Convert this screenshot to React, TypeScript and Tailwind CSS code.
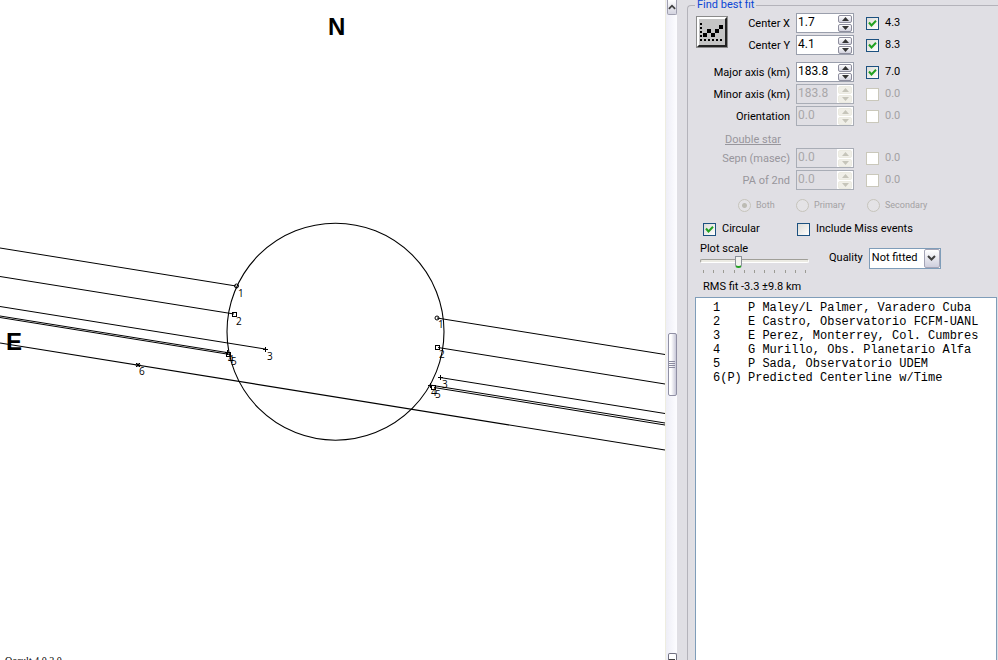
import { useState } from 'react';
import type { ReactNode } from 'react';

const observers = [
  { id: '1', name: 'P Maley/L Palmer, Varadero Cuba' },
  { id: '2', name: 'E Castro, Observatorio FCFM-UANL' },
  { id: '3', name: 'E Perez, Monterrey, Col. Cumbres' },
  { id: '4', name: 'G Murillo, Obs. Planetario Alfa' },
  { id: '5', name: 'P Sada, Observatorio UDEM' },
  { id: '6(P)', name: 'Predicted Centerline w/Time' },
];

// x1, y1, x2, y2 of each chord on the sky plane
const chords = [
  [0, 248, 236, 286],
  [0, 276.5, 234, 314],
  [0, 306.5, 265, 349],
  [0, 316, 228, 352.7],
  [0, 317.5, 230, 354.5],
  [437, 318, 665, 354.5],
  [438, 347.5, 665, 384],
  [440, 377.5, 665, 413.5],
  [430, 385, 665, 423],
  [434, 387.5, 665, 425],
];

const chordLabels = [
  { x: 238, y: 297, text: '1' },
  { x: 236, y: 325, text: '2' },
  { x: 267, y: 360, text: '3' },
  { x: 228, y: 363, text: '4' },
  { x: 231, y: 365, text: '5' },
  { x: 139, y: 375, text: '6' },
  { x: 438, y: 328, text: '1' },
  { x: 439, y: 358, text: '2' },
  { x: 442, y: 388, text: '3' },
  { x: 431, y: 396, text: '4' },
  { x: 435, y: 398, text: '5' },
];

const Cross = ({ x, y }: { x: number; y: number }) => (
  <path d={`M${x - 2.5} ${y}h5M${x} ${y - 2.5}v5`} />
);

const Plot = () => (
  <svg
    viewBox="0 0 665 660"
    preserveAspectRatio="xMidYMin slice"
    className="h-full w-full"
    role="img"
    aria-label="Occultation chords"
  >
    <g fill="none" stroke="#000">
      <circle cx="335.5" cy="331.7" r="108.5" strokeWidth="1.1" />
      {chords.map(([x1, y1, x2, y2]) => (
        <line key={`${x1}-${y1}`} x1={x1} y1={y1} x2={x2} y2={y2} />
      ))}
      <line x1="0" y1="343" x2="665" y2="450" strokeWidth="1.2" />
      <circle cx="236.5" cy="286" r="2" />
      <circle cx="437" cy="318" r="2" />
      <rect x="232.5" y="312.5" width="4" height="4" />
      <rect x="435.5" y="345.5" width="4" height="4" />
      <rect x="226.5" y="352.5" width="4" height="4" />
      <rect x="431.5" y="385.5" width="4" height="4" />
      <Cross x={265.5} y={349.5} />
      <Cross x={227.5} y={352.5} />
      <Cross x={440.5} y={377.5} />
      <Cross x={430.5} y={385.5} />
      <path d="M136 363l4 4m0-4l-4 4M135.500 365h5M138 363v4" />
    </g>
    <g className="font-['Open_Sans',sans-serif] text-[10px]">
      {chordLabels.map(({ x, y, text }) => (
        <text key={`${x}-${y}`} x={x} y={y}>
          {text}
        </text>
      ))}
    </g>
    <g className="font-['Liberation_Sans',sans-serif] text-[24px] font-bold">
      <text x="328" y="35">
        N
      </text>
      <text x="6" y="350">
        E
      </text>
    </g>
    <text x="5" y="664" className="font-['Liberation_Serif',serif] text-[10px]">
      Occult 4.0.2.0
    </text>
  </svg>
);

const Chevron = ({ up = false }: { up?: boolean }) => (
  <svg viewBox="0 0 9 6" className="h-1.5 w-[9px]" fill="none" stroke="#404040" strokeWidth="2">
    <path d={up ? 'M1 5l3.500-3.500L8 5' : 'M1 1l3.500 3.500L8 1'} />
  </svg>
);

const ScrollBar = () => (
  <div className="flex w-3 shrink-0 flex-col items-center justify-between border-l border-[#eeede0] bg-linear-to-r from-[#eeeef6] to-[#fdfdff] pl-px">
    <button
      aria-label="Scroll up"
      className="flex h-[15px] w-2.5 items-center justify-center overflow-hidden rounded-b-[2px] border border-t-0 border-[#a0a0b0] bg-linear-to-b from-white to-[#d4d4e0]"
    >
      <Chevron up />
    </button>
    <div className="mt-[60px] flex h-[63px] w-[9px] flex-col items-center justify-center gap-px rounded-[2px] border border-[#9090a4] bg-linear-to-r from-white from-30% to-[#c8c8d8]">
      <span className="h-px w-1.5 bg-[#8c8ca0]" />
      <span className="h-px w-1.5 bg-[#8c8ca0]" />
      <span className="h-px w-1.5 bg-[#8c8ca0]" />
      <span className="h-px w-1.5 bg-[#8c8ca0]" />
    </div>
    <button
      aria-label="Scroll down"
      className="flex h-[7px] w-[9px] items-end justify-center overflow-hidden rounded-t-[2px] border border-b-0 border-[#707080] bg-white"
    >
      <span className="h-px w-1.5 bg-[#404040]" />
    </button>
  </div>
);

interface CheckProps {
  checked?: boolean;
  disabled?: boolean;
  children: ReactNode;
  className?: string;
}

const Check = ({ checked = false, disabled = false, children, className = '' }: CheckProps) => {
  const [on, setOn] = useState(checked);

  return (
    <label className={`flex items-center gap-1.5 ${disabled ? 'text-[#a3a1a3]' : ''} ${className}`}>
      <span className="relative flex">
        <input
          type="checkbox"
          checked={on}
          disabled={disabled}
          onChange={() => setOn(!on)}
          className="size-[13px] appearance-none border border-[#1c5180] bg-linear-to-br from-[#dcdcd7] to-white disabled:border-[#cac8bb] disabled:from-white"
        />
        {on && (
          <svg
            viewBox="0 0 13 13"
            className="pointer-events-none absolute inset-0 size-[13px]"
            fill="none"
            stroke="#21a121"
            strokeWidth="2"
          >
            <path d="M3 5.500l2.500 3L10 3.800" />
          </svg>
        )}
      </span>
      {children}
    </label>
  );
};

const SpinButton = ({ up = false, disabled }: { up?: boolean; disabled: boolean }) => (
  <button
    disabled={disabled}
    aria-label={up ? 'Increase' : 'Decrease'}
    className="flex h-2 w-3.5 items-center justify-center rounded-[2px] border border-[#8e8e9e] bg-linear-to-b from-white to-[#d2d2de] text-[#333] disabled:border-[#ecebe2] disabled:bg-[#f0efe8] disabled:bg-none disabled:text-[#c6c5ba]"
  >
    <svg viewBox="0 0 7 4" className="h-1 w-[7px]" fill="currentColor">
      <path d={up ? 'M3.500 0L7 4H0z' : 'M0 0h7L3.500 4z'} />
    </svg>
  </button>
);

interface FitRowProps {
  label: string;
  value: string;
  error: string;
  checked?: boolean;
  disabled?: boolean;
  labelDisabled?: boolean;
}

const FitRow = ({
  label,
  value,
  error,
  checked = false,
  disabled = false,
  labelDisabled = false,
}: FitRowProps) => {
  const id = label.toLowerCase().replace(/\W+/g, '-');

  return (
    <div className="flex h-5 items-center">
      <label
        htmlFor={id}
        className={`flex-1 pt-0.5 text-right ${labelDisabled ? 'text-[#98969c]' : ''}`}
      >
        {label}
      </label>
      <div
        className={`ml-1.5 flex h-5 w-[58px] border ${
          disabled ? 'border-[#a9adb6]' : 'border-[#9a9fac] bg-white'
        }`}
      >
        <input
          id={id}
          defaultValue={value}
          disabled={disabled}
          className="h-4 w-10 min-w-0 pl-px text-[12px] disabled:text-[#a9a7a9]"
        />
        <div className="flex w-4 flex-col items-center justify-center gap-px bg-white">
          <SpinButton up disabled={disabled} />
          <SpinButton disabled={disabled} />
        </div>
      </div>
      <Check checked={checked} disabled={disabled} className="ml-3 w-[60px]">
        {error}
      </Check>
    </div>
  );
};

interface StarOptionProps {
  label: string;
  checked?: boolean;
  className?: string;
}

const StarOption = ({ label, checked = false, className = '' }: StarOptionProps) => (
  <label className={`flex items-center gap-[5px] ${className}`}>
    <input
      type="radio"
      name="star"
      disabled
      defaultChecked={checked}
      className="size-[13px] appearance-none rounded-full border border-[#c6c4bc] bg-[#e4e3e6] checked:bg-[radial-gradient(circle,#bdbcb4_2px,#e4e3e6_3px)]"
    />
    {label}
  </label>
);

const FitButton = () => (
  <button
    aria-label="Find best fit"
    className="mt-[3px] ml-px size-8 shrink-0 border border-[#8a8a8a] bg-[#c0c0c0]"
  >
    <svg viewBox="0 0 30 30" className="size-[30px]">
      <path d="M0 0h30L0 30z" fill="#fff" />
      <path d="M30 0v30H0z" fill="#222" />
      <path d="M2 2h26v26H2z" fill="#c4c4c4" />
      <g fill="#000">
        <path d="M3 6h2v2H3zM3 10h2v2H3zM3 14h2v2H3zM3 18h2v2H3zM3 22h2v2H3z" />
        <path d="M7 22h2v2H7zM11 22h2v2h-2zM15 22h2v2h-2zM19 22h2v2h-2zM23 22h2v2h-2z" />
        <path d="M6 16h4v4H6zM10 12h4v4h-4zM14 16h4v4h-4zM18 12h4v4h-4zM22 8h4v4h-4z" />
      </g>
    </svg>
  </button>
);

const ticks = Array.from({ length: 11 }, (_, i) => i);

const PlotScale = () => (
  <div className="w-[109px]">
    <label htmlFor="plot-scale" className="block h-3 leading-3">
      Plot scale
    </label>
    <input
      id="plot-scale"
      type="range"
      defaultValue={34}
      className="block h-3 w-full appearance-none bg-transparent [&::-webkit-slider-runnable-track]:h-1 [&::-webkit-slider-runnable-track]:rounded-xs [&::-webkit-slider-runnable-track]:border [&::-webkit-slider-runnable-track]:border-t-[#a09f98] [&::-webkit-slider-runnable-track]:border-r-white [&::-webkit-slider-runnable-track]:border-b-white [&::-webkit-slider-runnable-track]:border-l-[#a09f98] [&::-webkit-slider-runnable-track]:bg-[#ecebe4] [&::-webkit-slider-thumb]:-mt-1 [&::-webkit-slider-thumb]:h-3 [&::-webkit-slider-thumb]:w-[7px] [&::-webkit-slider-thumb]:appearance-none [&::-webkit-slider-thumb]:rounded-b-full [&::-webkit-slider-thumb]:border [&::-webkit-slider-thumb]:border-[#8a9199] [&::-webkit-slider-thumb]:border-b-2 [&::-webkit-slider-thumb]:border-b-[#21a121] [&::-webkit-slider-thumb]:bg-[#f3f3ef]"
    />
    <div className="mt-[3px] flex justify-between px-[3px]">
      {ticks.map((tick) => (
        <span key={tick} className="h-[3px] w-px bg-[#9c9b94]" />
      ))}
    </div>
  </div>
);

const Quality = () => (
  <div className="flex items-center gap-1.5">
    <label htmlFor="quality">Quality</label>
    <div className="relative">
      <select
        id="quality"
        className="h-[21px] w-[72px] appearance-none border border-[#7f9db9] bg-white pl-0.5"
      >
        <option>Not fitted</option>
      </select>
      <span className="pointer-events-none absolute top-px right-px flex h-[19px] w-4 items-center justify-center rounded-[2px] border border-[#a4a4b6] bg-linear-to-b from-white to-[#cfcfdd]">
        <Chevron />
      </span>
    </div>
  </div>
);

export default function App() {
  return (
    <div className="flex h-screen overflow-hidden bg-white font-['Roboto','Liberation_Sans',sans-serif] text-[11px] leading-4 text-black">
      <main className="min-w-0 flex-1">
        <Plot />
      </main>
      <ScrollBar />
      <aside className="flex w-[321px] shrink-0 flex-col bg-[#e0dfe4] pl-2.5">
        <fieldset className="flex min-h-0 flex-1 flex-col rounded-tl-sm border-t border-l border-[#b4b3ba] pl-[7px]">
          <legend className="h-2.5 px-0.5 leading-2.5 text-[#0a46d5]">Find best fit</legend>
          <div className="flex w-[231px] pt-[3px]">
            <FitButton />
            <div className="flex flex-1 flex-col gap-0.5">
              <FitRow label="Center X" value="1.7" error="4.3" checked />
              <FitRow label="Center Y" value="4.1" error="8.3" checked />
            </div>
          </div>
          <div className="mt-[7px] flex w-[231px] flex-col gap-0.5">
            <FitRow label="Major axis (km)" value="183.8" error="7.0" checked />
            <FitRow label="Minor axis (km)" value="183.8" error="0.0" disabled />
            <FitRow label="Orientation" value="0.0" error="0.0" disabled />
          </div>
          <h2 className="mt-1.5 h-4 pl-[30px] text-[#98969c] underline">Double star</h2>
          <div className="flex w-[231px] flex-col gap-0.5">
            <FitRow label="Sepn (masec)" value="0.0" error="0.0" disabled labelDisabled />
            <FitRow label="PA of 2nd" value="0.0" error="0.0" disabled labelDisabled />
          </div>
          <div className="mt-[7px] flex pl-[43px] text-[9px] text-[#a3a1a3]">
            <StarOption label="Both" checked className="w-[58px]" />
            <StarOption label="Primary" className="w-[71px]" />
            <StarOption label="Secondary" />
          </div>
          <div className="mt-2 flex pl-2">
            <Check checked className="w-[94px]">
              Circular
            </Check>
            <Check>Include Miss events</Check>
          </div>
          <div className="mt-1.5 flex items-center gap-5 pl-[5px]">
            <PlotScale />
            <Quality />
          </div>
          <p className="mt-1.5 pl-2">RMS fit -3.3 ±9.8 km</p>
          <ul className="mt-0.5 mr-px flex-1 border border-b-0 border-[#7f9db9] bg-white pt-[3px] pl-[17px] font-['Liberation_Mono',monospace] text-[12px] leading-3.5">
            {observers.map(({ id, name }) => (
              <li key={id} className="flex whitespace-nowrap">
                <span className="w-[35px]">{id}</span>
                {name}
              </li>
            ))}
          </ul>
        </fieldset>
      </aside>
    </div>
  );
}
